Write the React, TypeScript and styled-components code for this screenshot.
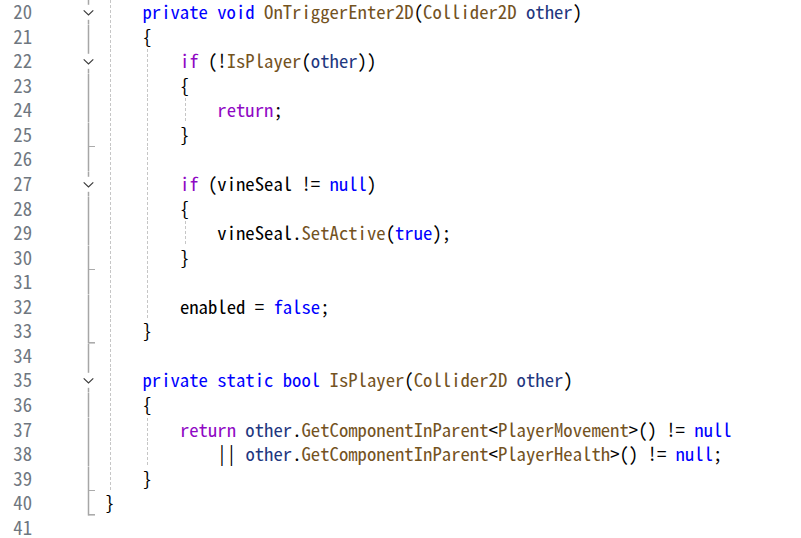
import React from "react";
import styled, { createGlobalStyle } from "styled-components";

const ROW_H = 24.57;
const CH = 9.36;
const UNIT = CH * 4;

const Global = createGlobalStyle`
  html, body { margin: 0; padding: 0; background: #ffffff; }
  body { overflow: hidden; }
`;

const Editor = styled.div`
  display: flex;
  flex-direction: column;
  width: 801px;
  height: 538px;
  overflow: hidden;
  background: #ffffff;
  font-family: "Noto Sans Mono CJK SC", "Noto Sans Mono CJK JP", "Liberation Mono", monospace;
  font-size: 18.72px;
`;

const Row = styled.div`
  display: grid;
  grid-template-columns: 32px 73px 1fr;
  height: ${ROW_H}px;
  flex: none;
`;

const LineNo = styled.div`
  display: flex;
  align-items: center;
  justify-content: flex-end;
  box-sizing: border-box;
  height: 100%;
  padding-bottom: 3px;
  color: #6f7780;
  line-height: ${ROW_H - 3}px;
`;

const FoldCell = styled.div`
  height: 100%;
`;

const Code = styled.div`
  display: flex;
  align-items: stretch;
  white-space: pre;
  height: 100%;
`;

const Indent = styled.span<{ $guide: boolean }>`
  flex: none;
  width: ${UNIT}px;
  height: 100%;
  background-image: ${(p) =>
    p.$guide ? "linear-gradient(to bottom, #c6c6c6 60%, transparent 60%)" : "none"};
  background-size: 1px 5px;
  background-repeat: repeat-y;
  background-position: 5px 0;
`;

const Text = styled.span`
  display: flex;
  align-items: center;
  box-sizing: border-box;
  height: 100%;
  padding-bottom: 3px;
  line-height: ${ROW_H - 3}px;
  color: #000000;
`;

type Kind = "kw" | "ctl" | "fn" | "prm" | "pl";

const colors: Record<Kind, string> = {
  kw: "#0000ff",
  ctl: "#8f08c4",
  fn: "#74531f",
  prm: "#1f377f",
  pl: "#000000",
};

const Token = styled.span<{ $kind: Kind }>`
  color: ${(p) => colors[p.$kind]};
`;

type Fold = "start" | "line" | "end" | "last" | "none";

type Line = {
  n: number;
  indent: number;
  guides: number;
  fold: Fold;
  tokens: [string, Kind][];
};

const kw = (s: string): [string, Kind] => [s, "kw"];
const ctl = (s: string): [string, Kind] => [s, "ctl"];
const fn = (s: string): [string, Kind] => [s, "fn"];
const prm = (s: string): [string, Kind] => [s, "prm"];
const pl = (s: string): [string, Kind] => [s, "pl"];

const lines: Line[] = [
  { n: 20, indent: 1, guides: 1, fold: "start", tokens: [kw("private"), pl(" "), kw("void"), pl(" "), fn("OnTriggerEnter2D"), pl("("), fn("Collider2D"), pl(" "), prm("other"), pl(")")] },
  { n: 21, indent: 1, guides: 1, fold: "line", tokens: [pl("{")] },
  { n: 22, indent: 2, guides: 2, fold: "start", tokens: [ctl("if"), pl(" (!"), fn("IsPlayer"), pl("("), prm("other"), pl("))")] },
  { n: 23, indent: 2, guides: 2, fold: "line", tokens: [pl("{")] },
  { n: 24, indent: 3, guides: 3, fold: "line", tokens: [ctl("return"), pl(";")] },
  { n: 25, indent: 2, guides: 2, fold: "end", tokens: [pl("}")] },
  { n: 26, indent: 2, guides: 2, fold: "line", tokens: [] },
  { n: 27, indent: 2, guides: 2, fold: "start", tokens: [ctl("if"), pl(" ("), pl("vineSeal"), pl(" != "), kw("null"), pl(")")] },
  { n: 28, indent: 2, guides: 2, fold: "line", tokens: [pl("{")] },
  { n: 29, indent: 3, guides: 3, fold: "line", tokens: [pl("vineSeal."), fn("SetActive"), pl("("), kw("true"), pl(");")] },
  { n: 30, indent: 2, guides: 2, fold: "end", tokens: [pl("}")] },
  { n: 31, indent: 2, guides: 2, fold: "line", tokens: [] },
  { n: 32, indent: 2, guides: 2, fold: "line", tokens: [pl("enabled = "), kw("false"), pl(";")] },
  { n: 33, indent: 1, guides: 1, fold: "end", tokens: [pl("}")] },
  { n: 34, indent: 1, guides: 1, fold: "line", tokens: [] },
  { n: 35, indent: 1, guides: 1, fold: "start", tokens: [kw("private"), pl(" "), kw("static"), pl(" "), kw("bool"), pl(" "), fn("IsPlayer"), pl("("), fn("Collider2D"), pl(" "), prm("other"), pl(")")] },
  { n: 36, indent: 1, guides: 1, fold: "line", tokens: [pl("{")] },
  { n: 37, indent: 2, guides: 2, fold: "line", tokens: [ctl("return"), pl(" "), prm("other"), pl("."), fn("GetComponentInParent"), pl("<"), fn("PlayerMovement"), pl(">() != "), kw("null")] },
  { n: 38, indent: 3, guides: 2, fold: "line", tokens: [pl("|| "), prm("other"), pl("."), fn("GetComponentInParent"), pl("<"), fn("PlayerHealth"), pl(">() != "), kw("null"), pl(";")] },
  { n: 39, indent: 1, guides: 1, fold: "end", tokens: [pl("}")] },
  { n: 40, indent: 0, guides: 0, fold: "last", tokens: [pl("}")] },
  { n: 41, indent: 0, guides: 0, fold: "none", tokens: [] },
];

const FX = 56.5;
const LINE_C = "#a6a6a6";

function FoldMark({ kind }: { kind: Fold }) {
  const h = ROW_H;
  if (kind === "none") return null;
  return (
    <svg width="73" height={h} viewBox={`0 0 73 ${h}`} style={{ display: "block" }}>
      {kind === "start" ? (
        <>
          <line x1={FX} y1={0} x2={FX} y2={4.8} stroke={LINE_C} strokeWidth={1.5} />
          <line x1={FX} y1={19.8} x2={FX} y2={h} stroke={LINE_C} strokeWidth={1.5} />
          <polyline
            points={`${FX - 4.8},10.4 ${FX},15 ${FX + 4.8},10.4`}
            fill="none"
            stroke="#3c3c3c"
            strokeWidth={1.2}
          />
        </>
      ) : (
        <line x1={FX} y1={0} x2={FX} y2={h} stroke={LINE_C} strokeWidth={1.5} />
      )}
      {(kind === "end" || kind === "last") && (
        <line x1={FX} y1={h - 0.75} x2={FX + 6.5} y2={h - 0.75} stroke={LINE_C} strokeWidth={1.5} />
      )}
    </svg>
  );
}

function CodeLine({ line }: { line: Line }) {
  const units = Math.max(line.indent, line.guides);
  return (
    <Row>
      <LineNo>{line.n}</LineNo>
      <FoldCell>
        <FoldMark kind={line.fold} />
      </FoldCell>
      <Code>
        {Array.from({ length: units }).map((_, i) => (
          <Indent key={i} $guide={i < line.guides} />
        ))}
        <Text>
          {line.tokens.map(([s, k], i) => (
            <Token key={i} $kind={k}>
              {s}
            </Token>
          ))}
        </Text>
      </Code>
    </Row>
  );
}

export default function App() {
  return (
    <>
      <Global />
      <Editor>
        {lines.map((l) => (
          <CodeLine key={l.n} line={l} />
        ))}
      </Editor>
    </>
  );
}
